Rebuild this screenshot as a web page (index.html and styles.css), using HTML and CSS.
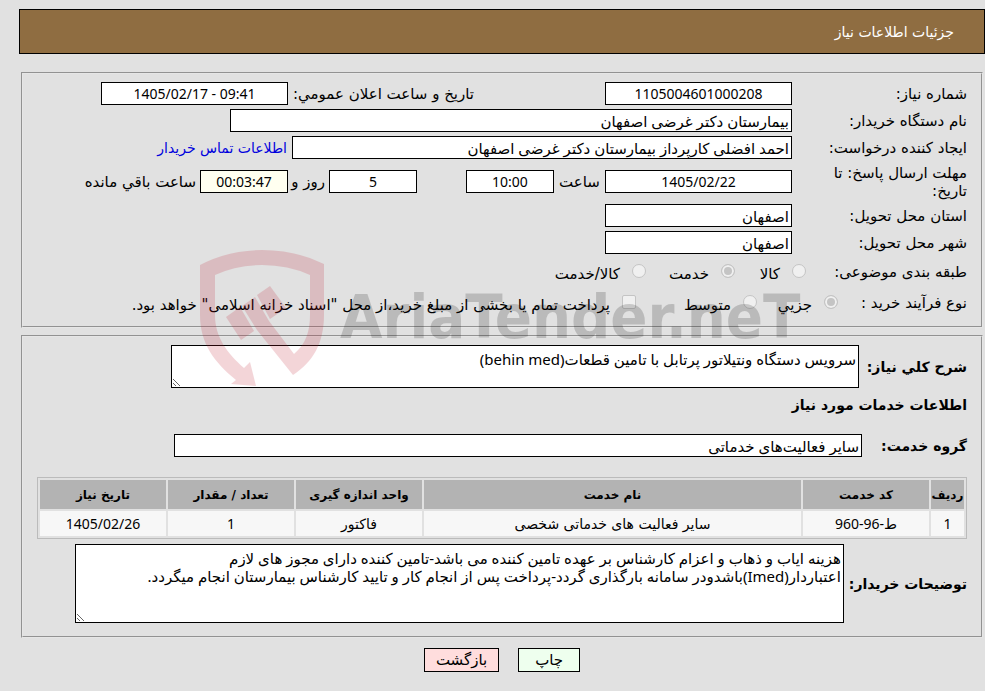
FILE: index.html
```html
<!DOCTYPE html>
<html lang="fa" dir="rtl">
<head>
    <meta charset="UTF-8">
    <meta name="viewport" content="width=device-width, initial-scale=1.0">
    <title>جزئیات اطلاعات نیاز</title>
    <link rel="stylesheet" href="styles.css">
</head>
<body>

    <h1 class="page-title">جزئیات اطلاعات نیاز</h1>

    <!-- مشخصات نیاز -->
    <section class="panel">
        <div class="row">
            <label class="caption" for="need-no">شماره نیاز:</label>
            <input class="box medium number" id="need-no" type="text" value="1105004601000208" readonly>
            <label class="announce" for="announce">تاریخ و ساعت اعلان عمومي:</label>
            <input class="box medium number" id="announce" type="text" value="1405/02/17 - 09:41" readonly>
        </div>
        <div class="row">
            <label class="caption" for="buyer">نام دستگاه خریدار:</label>
            <input class="box wide" id="buyer" type="text" value="بیمارستان دکتر غرضی اصفهان" readonly>
        </div>
        <div class="row">
            <label class="caption" for="creator">ایجاد کننده درخواست:</label>
            <input class="box creator" id="creator" type="text" value="احمد افضلی کارپرداز بیمارستان دکتر غرضی اصفهان" readonly>
            <a class="contact" href="#">اطلاعات تماس خریدار</a>
        </div>
        <div class="row deadline">
            <label class="caption" for="deadline"><span>مهلت ارسال پاسخ: تا تاریخ:</span></label>
            <input class="box medium number" id="deadline" type="text" value="1405/02/22" readonly>
            <label class="unit" for="hour">ساعت</label>
            <input class="box small number" id="hour" type="text" value="10:00" readonly>
            <input class="box small number days" id="days" type="text" value="5" aria-label="روز" readonly>
            <label class="and" for="remain">روز و</label>
            <input class="box small number remain" id="remain" type="text" value="00:03:47" readonly>
            <span>ساعت باقي مانده</span>
        </div>
        <div class="row">
            <label class="caption" for="province">استان محل تحویل:</label>
            <input class="box medium" id="province" type="text" value="اصفهان" readonly>
        </div>
        <div class="row">
            <label class="caption" for="city">شهر محل تحویل:</label>
            <input class="box medium" id="city" type="text" value="اصفهان" readonly>
        </div>
        <div class="row choices">
            <span class="caption">طبقه بندی موضوعی:</span>
            <label class="choice goods"><input type="radio" name="kind" disabled>کالا</label>
            <label class="choice service"><input type="radio" name="kind" checked disabled>خدمت</label>
            <label class="choice"><input type="radio" name="kind" disabled>کالا/خدمت</label>
        </div>
        <div class="row choices process">
            <span class="caption">نوع فرآیند خرید :</span>
            <label class="choice minor"><input type="radio" name="process" checked disabled>جزیي</label>
            <label class="choice average"><input type="radio" name="process" disabled>متوسط</label>
            <label class="choice"><input type="checkbox" disabled>پرداخت تمام یا بخشی از مبلغ خرید،از محل "اسناد خزانه اسلامی" خواهد بود.</label>
        </div>
    </section>

    <!-- شرح و خدمات -->
    <section class="panel services">
        <div class="line">
            <label class="strong" for="summary">شرح کلي نیاز:</label>
            <textarea class="box summary" id="summary" readonly>سرویس دستگاه ونتیلاتور پرتابل با تامین قطعات(behin med)</textarea>
        </div>
        <h2 class="strong subtitle">اطلاعات خدمات مورد نیاز</h2>
        <div class="line group">
            <label class="strong" for="group">گروه خدمت:</label>
            <input class="box group-box" id="group" type="text" value="سایر فعالیت‌های خدماتی" readonly>
        </div>
        <table class="items">
            <colgroup>
                <col class="col-row">
                <col class="col-mid">
                <col>
                <col class="col-mid">
                <col class="col-mid">
                <col class="col-mid">
            </colgroup>
            <thead>
                <tr>
                    <th>ردیف</th>
                    <th>کد خدمت</th>
                    <th>نام خدمت</th>
                    <th>واحد اندازه گیری</th>
                    <th>تعداد / مقدار</th>
                    <th>تاریخ نیاز</th>
                </tr>
            </thead>
            <tbody>
                <tr>
                    <td>1</td>
                    <td>ط-96-960</td>
                    <td class="name">سایر فعالیت های خدماتی شخصی</td>
                    <td class="name">فاکتور</td>
                    <td>1</td>
                    <td>1405/02/26</td>
                </tr>
            </tbody>
        </table>
        <div class="line">
            <label class="strong" for="notes">توضیحات خریدار:</label>
            <textarea class="box notes" id="notes" readonly>هزینه ایاب و ذهاب و اعزام کارشناس بر عهده تامین کننده می باشد-تامین کننده دارای مجوز های لازم
اعتباردار(Imed)باشدودر سامانه بارگذاری گردد-پرداخت پس از انجام کار و تایید کارشناس بیمارستان انجام میگردد.</textarea>
        </div>
    </section>

    <div class="actions">
        <button class="btn print" type="button">چاپ</button>
        <button class="btn back" type="button">بازگشت</button>
    </div>

    <!-- واترمارک -->
    <div class="watermark" dir="ltr">
        <svg class="shield" viewBox="0 0 126 138" width="126" height="138">
            <g fill="#c01c30">
                <path d="M0 16 Q29 1 62 1 Q96 1 124 15 V66 C124 94 113 113 93 126 L57 81 L42 57 L55 48 L69 72 L94 105 C106 95 110 82 110 66 V26 Q88 16 62 16 Q36 16 15 26 V66 C15 88 27 104 44 119 L50 113 L56 137 L31 135 L36 131 C14 113 0 94 0 66 Z"/>
                <path d="M26 68 L40 58 L54 82 L41 91 Z"/>
                <path d="M57 46 L70 37 L86 59 L70 70 Z"/>
            </g>
        </svg>
        <span class="brand">AriaTender.neT</span>
    </div>

</body>
</html>
```
FILE: styles.css
```css
/* Base */
* { box-sizing: border-box; }
body { position: relative; margin: 0; padding: 9px 0 20px 19px; background: #e1e1e1; color: #000; font: 15px/18px "DejaVu Sans", sans-serif; }
input, textarea, button { font: inherit; color: inherit; margin: 0; }

.page-title { margin: 0 0 18px; padding: 13px 30px 12px; border: 1px solid #000; background: #8f6d41; color: #fff; font-size: 14px; font-weight: normal; }

/* Panels */
.panel { margin: 0 2px 7px; padding: 6px 14px 8px; border: 2px groove #e6e6e6; }
.row { display: flex; align-items: center; min-height: 27px; }
.caption { flex: none; width: 175px; }
.caption span { display: block; width: 150px; }
.deadline { min-height: 41px; }

.box { height: 23px; padding: 0 2px; border: 1px solid #000; border-radius: 0; background: #fff; outline: none; font-family: "Noto Sans", "DejaVu Sans", sans-serif; }
.number { direction: ltr; font-size: 14px; text-align: center; }
.medium { width: 187px; }
.small { width: 88px; }
.wide { width: 562px; }
.creator { width: 500px; }
.announce { width: 317px; padding-left: 5px; text-align: left; }
.contact { margin-right: 5px; color: #0000dd; font-size: 14px; text-decoration: none; }
.unit { width: 51px; text-align: center; }
.days { margin-right: 49px; }
.and { width: 41px; padding-right: 4px; }
.remain { margin-left: 4px; background: #fffff0; }

/* Radio buttons and check box */
.choices { min-height: 31px; }
.choice { display: flex; align-items: flex-start; gap: 12px; padding-top: 5px; line-height: 20px; }
.choice input { appearance: none; flex: none; width: 14px; height: 14px; border: 1px solid #c4c4c4; border-radius: 50%; background: #f0f0f0; }
.choice input:checked { background: #c4c4c4; box-shadow: inset 0 0 0 2px #f0f0f0; }
.choice input[type="checkbox"] { border-radius: 2px; }
.choices .caption { margin-left: -14px; }
.goods { width: 71px; }
.service { width: 89px; }
.process .caption { width: 143px; }
.minor { width: 81px; }
.average { width: 121px; }

/* Services */
.services { padding: 8px 14px 13px; margin-bottom: 10px; }
.line { display: flex; align-items: center; gap: 5px; }
.strong { margin: 0; min-width: 103px; font-size: 14px; font-weight: bold; white-space: nowrap; }
.subtitle { padding: 8px 0 20px; }
textarea.box { display: block; padding: 4px 2px; }
.summary { width: 688px; height: 43px; }
.group .strong { min-width: 100px; }
.group-box { width: 688px; }
.notes { width: 769px; height: 79px; white-space: pre-wrap; }

.items { width: 100%; margin: 20px 0 5px; border: 1px solid #bbb; border-collapse: separate; border-spacing: 2px; table-layout: fixed; font-size: 14px; text-align: center; }
.items th { height: 29px; padding: 0; background: #b3b3b3; font-size: 12px; }
.items td { height: 25px; padding: 0; background: #f7f7f7; font-family: "Noto Sans", "DejaVu Sans", sans-serif; }
.items .name { font-family: "DejaVu Sans", sans-serif; }
.col-row { width: 33px; }
.col-mid { width: 126px; }

/* Buttons */
.actions { display: flex; justify-content: center; gap: 19px; }
.btn { height: 24px; padding: 0 11px; border: 1px solid #000; }
.print { padding: 0 16px; background: #eeffee; }
.back { background: #ffdddd; }

/* Watermark over the form */
.watermark { position: absolute; top: 249px; left: 200px; display: flex; gap: 14px; opacity: 0.18; pointer-events: none; }
.shield { flex: none; }
.brand { padding-top: 38px; font: bold 61px/60px "DejaVu Sans Condensed", "DejaVu Sans", sans-serif; color: #111; }
```
